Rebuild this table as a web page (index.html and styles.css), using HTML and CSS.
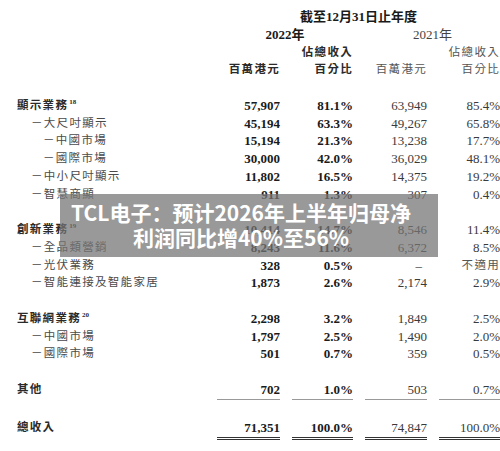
FILE: index.html
```html
<!DOCTYPE html>
<html>
<head>
    <title>TCL電子 收入分析</title>
    <link rel="stylesheet" href="styles.css">
</head>
<body>
    <div class="report">
        <div class="row">
            <span></span>
            <span class="span-all head-b">截至12月31日止年度</span>
        </div>
        <div class="row">
            <span></span>
            <span class="span-two head-b">2022年</span>
            <span class="span-two head-r">2021年</span>
        </div>
        <div class="row">
            <span></span>
            <span></span>
            <span class="num zh-b">佔總收入</span>
            <span></span>
            <span class="num zh-r">佔總收入</span>
        </div>
        <div class="row">
            <span></span>
            <span class="num zh-b">百萬港元</span>
            <span class="num zh-b">百分比</span>
            <span class="num zh-r">百萬港元</span>
            <span class="num zh-r">百分比</span>
        </div>

        <div class="group">
            <div class="row">
                <span class="label main">顯示業務<sup>18</sup></span>
                <span class="num b">57,907</span>
                <span class="num b">81.1%</span>
                <span class="num r">63,949</span>
                <span class="num r">85.4%</span>
            </div>
            <div class="row">
                <span class="label sub">－大尺吋顯示</span>
                <span class="num b">45,194</span>
                <span class="num b">63.3%</span>
                <span class="num r">49,267</span>
                <span class="num r">65.8%</span>
            </div>
            <div class="row">
                <span class="label sub2">－中國市場</span>
                <span class="num b">15,194</span>
                <span class="num b">21.3%</span>
                <span class="num r">13,238</span>
                <span class="num r">17.7%</span>
            </div>
            <div class="row">
                <span class="label sub2">－國際市場</span>
                <span class="num b">30,000</span>
                <span class="num b">42.0%</span>
                <span class="num r">36,029</span>
                <span class="num r">48.1%</span>
            </div>
            <div class="row">
                <span class="label sub">－中小尺吋顯示</span>
                <span class="num b">11,802</span>
                <span class="num b">16.5%</span>
                <span class="num r">14,375</span>
                <span class="num r">19.2%</span>
            </div>
            <div class="row">
                <span class="label sub">－智慧商顯</span>
                <span class="num b">911</span>
                <span class="num b">1.3%</span>
                <span class="num r">307</span>
                <span class="num r">0.4%</span>
            </div>
        </div>

        <div class="group">
            <div class="row">
                <span class="label main">創新業務<sup>19</sup></span>
                <span class="num b">10,414</span>
                <span class="num b">14.7%</span>
                <span class="num r">8,546</span>
                <span class="num r">11.4%</span>
            </div>
            <div class="row">
                <span class="label sub">－全品類營銷</span>
                <span class="num b">8,243</span>
                <span class="num b">11.6%</span>
                <span class="num r">6,372</span>
                <span class="num r">8.5%</span>
            </div>
            <div class="row">
                <span class="label sub">－光伏業務</span>
                <span class="num b">328</span>
                <span class="num b">0.5%</span>
                <span class="num r dash">–</span>
                <span class="num zh-r">不適用</span>
            </div>
            <div class="row">
                <span class="label sub">－智能連接及智能家居</span>
                <span class="num b">1,873</span>
                <span class="num b">2.6%</span>
                <span class="num r">2,174</span>
                <span class="num r">2.9%</span>
            </div>
        </div>

        <div class="group">
            <div class="row">
                <span class="label main">互聯網業務<sup>20</sup></span>
                <span class="num b">2,298</span>
                <span class="num b">3.2%</span>
                <span class="num r">1,849</span>
                <span class="num r">2.5%</span>
            </div>
            <div class="row">
                <span class="label sub">－中國市場</span>
                <span class="num b">1,797</span>
                <span class="num b">2.5%</span>
                <span class="num r">1,490</span>
                <span class="num r">2.0%</span>
            </div>
            <div class="row">
                <span class="label sub">－國際市場</span>
                <span class="num b">501</span>
                <span class="num b">0.7%</span>
                <span class="num r">359</span>
                <span class="num r">0.5%</span>
            </div>
        </div>

        <div class="group">
            <div class="row rule">
                <span class="label main">其他</span>
                <span class="num b">702</span>
                <span class="num b">1.0%</span>
                <span class="num r">503</span>
                <span class="num r">0.7%</span>
            </div>
        </div>

        <div class="group total">
            <div class="row double">
                <span class="label main">總收入</span>
                <span class="num b">71,351</span>
                <span class="num b">100.0%</span>
                <span class="num r">74,847</span>
                <span class="num r">100.0%</span>
            </div>
        </div>
    </div>

    <div class="headline">
        TCL电子：预计2026年上半年归母净<br>利润同比增40%至56%
    </div>
</body>
</html>
```

FILE: styles.css
```css
body {
    margin: 0;
    width: 500px;
    height: 451px;
    overflow: hidden;
    background: #fff;
    color: #222;
    font-family: "Liberation Serif", "Noto Sans CJK TC", serif;
    font-size: 13px;
    position: relative;
}

.report {
    padding: 8px 0 0 17px;
}

.row {
    display: grid;
    grid-template-columns: 188px 63px 61px 62px 61px;
    column-gap: 12px;
    height: 17.75px;
    line-height: 17.75px;
    white-space: nowrap;
}

.group {
    margin-top: 17.75px;
}

.total {
    margin-top: 20.75px;
}

.span-all {
    grid-column: 2 / 6;
    text-align: center;
}

.span-two {
    grid-column: span 2;
    text-align: center;
}

.head-b {
    font-weight: 700;
    color: #1a1a1a;
}

.head-r {
    color: #444;
}

.num {
    text-align: right;
}

.b {
    font-weight: 700;
    color: #1a1a1a;
}

.r {
    color: #3a3a3a;
}

.dash {
    padding-right: 5px;
}

.zh-b,
.zh-r {
    font-size: 11.5px;
    letter-spacing: 1.3px;
}

.zh-b {
    font-weight: 700;
    color: #2a2a2a;
}

.zh-r {
    color: #555;
}

.label {
    font-size: 11.5px;
    letter-spacing: 1.3px;
    color: #4a4a4a;
}

.label.main {
    font-weight: 700;
    color: #2a2a2a;
}

.label sup {
    font-family: "Liberation Serif", serif;
    font-size: 7px;
    letter-spacing: 0;
    line-height: 0;
    vertical-align: 5px;
    margin-left: 1px;
}

.label.sub {
    padding-left: 14px;
}

.label.sub2 {
    padding-left: 26px;
}

.rule .num {
    border-bottom: 1px solid #999;
}

.double .num {
    border-bottom: 3px double #333;
}

.headline {
    position: absolute;
    left: 60px;
    top: 194px;
    width: 378px;
    height: 63px;
    box-sizing: border-box;
    padding: 6px 16px 0 0;
    background: rgba(118, 118, 118, 0.74);
    color: #fff;
    font-family: "Noto Sans CJK SC", sans-serif;
    font-weight: 700;
    font-size: 21px;
    line-height: 25px;
    text-align: center;
    white-space: nowrap;
}
```
